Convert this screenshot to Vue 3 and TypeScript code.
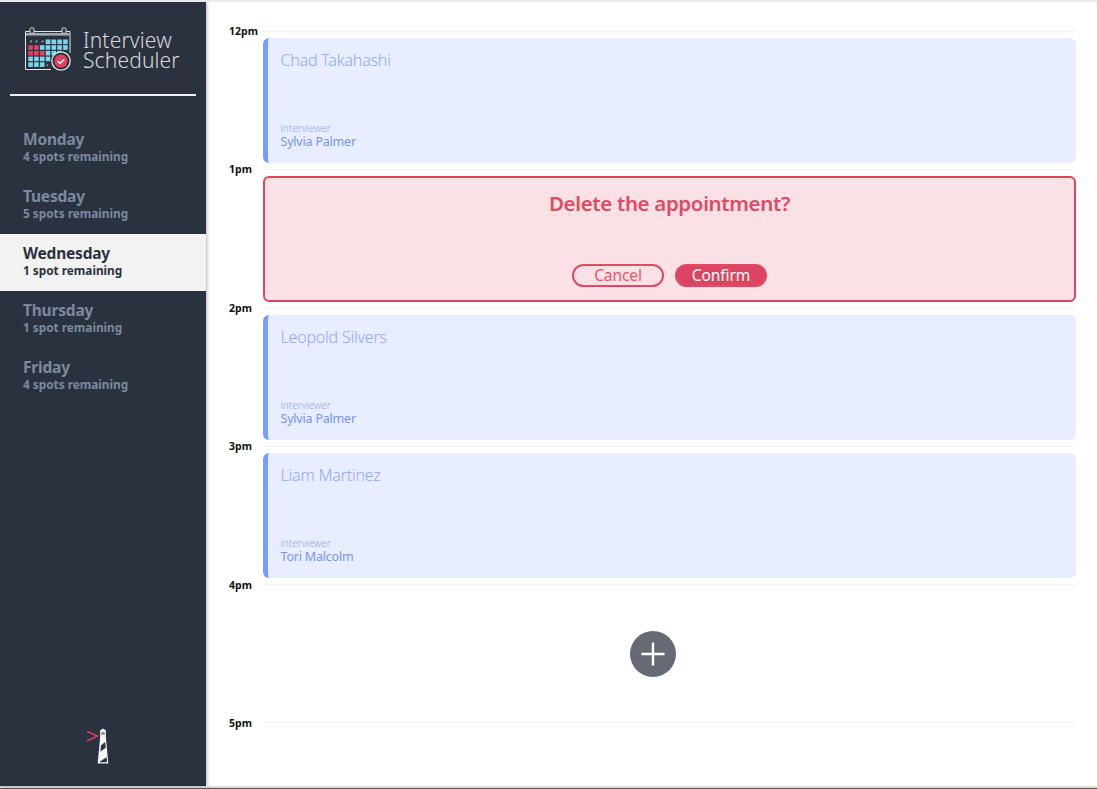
<script setup lang="ts">
interface Day { name: string; spots: string; selected?: boolean }
interface Appt { time: string; student?: string; interviewer?: string; kind: 'show' | 'confirm' | 'empty' }

const days: Day[] = [
  { name: 'Monday', spots: '4 spots remaining' },
  { name: 'Tuesday', spots: '5 spots remaining' },
  { name: 'Wednesday', spots: '1 spot remaining', selected: true },
  { name: 'Thursday', spots: '1 spot remaining' },
  { name: 'Friday', spots: '4 spots remaining' },
]

const appts: Appt[] = [
  { time: '12pm', student: 'Chad Takahashi', interviewer: 'Sylvia Palmer', kind: 'show' },
  { time: '1pm', kind: 'confirm' },
  { time: '2pm', student: 'Leopold Silvers', interviewer: 'Sylvia Palmer', kind: 'show' },
  { time: '3pm', student: 'Liam Martinez', interviewer: 'Tori Malcolm', kind: 'show' },
  { time: '4pm', kind: 'empty' },
]

const cells: { x: number; y: number; c: string }[] = []
const rows = [
  '...bbbb',
  'rrbbbbb',
  'rrrbbb.',
  'bbbb...',
  'bbb....',
]
rows.forEach((row, j) => {
  row.split('').forEach((ch, i) => {
    if (ch === 'b' || ch === 'r') {
      cells.push({ x: 3.3 + i * 5.8, y: 12.5 + j * 5.7, c: ch === 'r' ? '#e0425f' : '#7ad6e8' })
    }
  })
})
</script>

<template>
  <div class="page">
    <div class="frame">
      <aside class="sidebar">
        <div class="brand">
          <svg class="logo" width="46" height="44" viewBox="0 0 46 44" aria-hidden="true">
            <path d="M26 42.5H0.5V4.5H45V26" fill="none" stroke="#e4e4e4" stroke-width="1" />
            <rect x="1" y="6" width="43" height="2.6" fill="#a5a8ae" />
            <rect x="5" y="0.8" width="4" height="5.6" rx="1.5" fill="#2b323f" stroke="#e4e4e4" />
            <rect x="37" y="0.8" width="4" height="5.6" rx="1.5" fill="#2b323f" stroke="#e4e4e4" />
            <rect x="5" y="13.5" width="2" height="1.8" fill="#98a0ac" />
            <rect x="10.6" y="13.5" width="2" height="1.8" fill="#98a0ac" />
            <rect x="16.6" y="13.5" width="2" height="1.8" fill="#98a0ac" />
            <rect v-for="(cell, i) in cells" :key="i" :x="cell.x" :y="cell.y" width="4.6" height="4.6" :fill="cell.c" />
            <rect x="21.5" y="37.5" width="1.6" height="1.6" fill="#98a0ac" />
            <circle cx="36" cy="34" r="9.2" fill="#2b323f" stroke="#e4e4e4" stroke-width="1.3" />
            <circle cx="36" cy="34" r="6.6" fill="#e0425f" />
            <path d="M32.8 34.2l2.3 2.1 4.2-3.8" fill="none" stroke="#fff" stroke-width="1.4" />
          </svg>
          <div class="brand-text">Interview<br />Scheduler</div>
        </div>
        <hr class="divider" />
        <nav class="days">
          <div v-for="d in days" :key="d.name" class="day" :class="{ selected: d.selected }">
            <div class="day-name">{{ d.name }}</div>
            <div class="day-spots">{{ d.spots }}</div>
          </div>
        </nav>
        <svg class="lighthouse" width="26" height="37" viewBox="0 0 26 37" aria-hidden="true">
          <path d="M2 3.5L12.5 8 2 13" fill="none" stroke="#d8405c" stroke-width="1.4" />
          <path d="M18 0.5l2.9 2v7l2.4 26H12.7l2.4-26v-7z" fill="#f6f6f6" />
          <rect x="16.2" y="4" width="3.6" height="3" fill="#2b323f" opacity="0.5" />
          <path d="M16 17.5l4.2-3.4 0.5 5.6-5.3 3.8zM15 33.5l6.6-4.2 0.4 4.2-1 0.8h-6z" fill="#2b323f" />
        </svg>
      </aside>
      <main class="schedule">
        <article v-for="a in appts" :key="a.time" class="appt">
          <header class="appt-head">
            <span class="time">{{ a.time }}</span>
            <span class="rule"></span>
          </header>
          <section v-if="a.kind === 'show'" class="card show">
            <div class="student">{{ a.student }}</div>
            <div class="who">
              <div class="who-label">interviewer</div>
              <div class="who-name">{{ a.interviewer }}</div>
            </div>
          </section>
          <section v-else-if="a.kind === 'confirm'" class="card confirm">
            <h1 class="question">Delete the appointment?</h1>
            <div class="actions">
              <button class="btn cancel">Cancel</button>
              <button class="btn ok">Confirm</button>
            </div>
          </section>
          <section v-else class="add-wrap">
            <svg class="add" width="46" height="46" viewBox="0 0 46 46" aria-hidden="true">
              <circle cx="23" cy="23" r="23" fill="#656a75" />
              <path d="M11.5 23h23M23 11.5v23" stroke="#fff" stroke-width="2.4" fill="none" />
            </svg>
          </section>
        </article>
        <article class="appt">
          <header class="appt-head">
            <span class="time">5pm</span>
            <span class="rule"></span>
          </header>
        </article>
      </main>
    </div>
  </div>
</template>

<style>
html, body { margin: 0; background: #fff; }
</style>

<style scoped>
.page {
  width: 1097px;
  height: 789px;
  box-sizing: border-box;
  border-top: 2px solid #e9e9e9;
  border-bottom: 1px solid #5a5347;
  overflow: hidden;
  font-family: "Noto Sans", "Open Sans", sans-serif;
}
.frame {
  display: flex;
  height: 100%;
  box-sizing: border-box;
  border-bottom: 2px solid #dcdcdc;
}
.sidebar {
  width: 206px;
  flex: none;
  background: #2b323f;
  box-shadow: 1px 0 3px rgba(0, 0, 0, 0.3);
  display: flex;
  flex-direction: column;
  position: relative;
  z-index: 1;
}
.brand {
  display: flex;
  align-items: center;
  gap: 12px;
  padding: 24px 0 0 25px;
  height: 46px;
}
.brand-text {
  font-weight: 300;
  font-size: 21px;
  line-height: 20px;
  color: #d6d8dc;
  letter-spacing: 0.15px;
  padding-top: 2px;
}
.divider {
  margin: 22px 10px 24px;
  border: 0;
  height: 2px;
  background: #f0f0f0;
}
.days { display: flex; flex-direction: column; }
.day {
  height: 57px;
  box-sizing: border-box;
  padding: 10px 0 0 23px;
  color: #7c899f;
  font-weight: 700;
}
.day.selected {
  background: #f2f2f2;
  color: #2b323f;
}
.day-name { font-size: 15.5px; line-height: 19px; letter-spacing: -0.2px; }
.day-spots { font-size: 11.8px; line-height: 15px; }
.lighthouse { margin: auto 0 21px 85px; }
.schedule {
  flex: 1;
  padding: 22px 21px 0 23px;
  min-width: 0;
}
.appt { height: 138.4px; }
.appt-head {
  display: flex;
  align-items: center;
  height: 14px;
}
.time {
  width: 34px;
  font-size: 10.5px;
  font-weight: 700;
  color: #111;
}
.rule { flex: 1; height: 1px; background: #f2f2f2; }
.card {
  margin-left: 34px;
  height: 125.2px;
  box-sizing: border-box;
  border-radius: 6px;
}
.show {
  background: #e8edff;
  border-left: 5px solid #7b9cff;
  padding: 12px 12px 14px 12.5px;
  display: flex;
  flex-direction: column;
  justify-content: space-between;
}
.student {
  font-size: 16px;
  font-weight: 300;
  color: #8fa8fb;
  line-height: 20px;
  letter-spacing: -0.2px;
}
.who-label { font-size: 10px; font-weight: 300; color: #8fa8fb; line-height: 12px; }
.who-name { font-size: 12.5px; color: #7595f5; line-height: 15px; letter-spacing: -0.2px; }
.confirm {
  background: #f9e1e5;
  border: 2px solid #e0425f;
  display: flex;
  flex-direction: column;
  align-items: center;
}
.question {
  margin: 12px 0 0;
  font-size: 20.5px;
  font-weight: 600;
  line-height: 26px;
  color: #df4a65;
  letter-spacing: -0.35px;
}
.actions {
  margin-top: auto;
  margin-bottom: 13px;
  display: flex;
  gap: 11px;
}
.btn {
  width: 92px;
  height: 23px;
  padding: 0;
  border-radius: 12px;
  font-family: inherit;
  font-size: 15.5px;
  line-height: 19px;
  letter-spacing: -0.1px;
  box-sizing: border-box;
  border: 2px solid #df4a65;
}
.cancel { background: transparent; color: #e5566f; }
.ok { background: #dc4462; color: #fff; }
.add-wrap {
  height: 124px;
  display: flex;
  justify-content: center;
  padding-top: 39px;
  box-sizing: border-box;
}
.add { display: block; }
</style>
